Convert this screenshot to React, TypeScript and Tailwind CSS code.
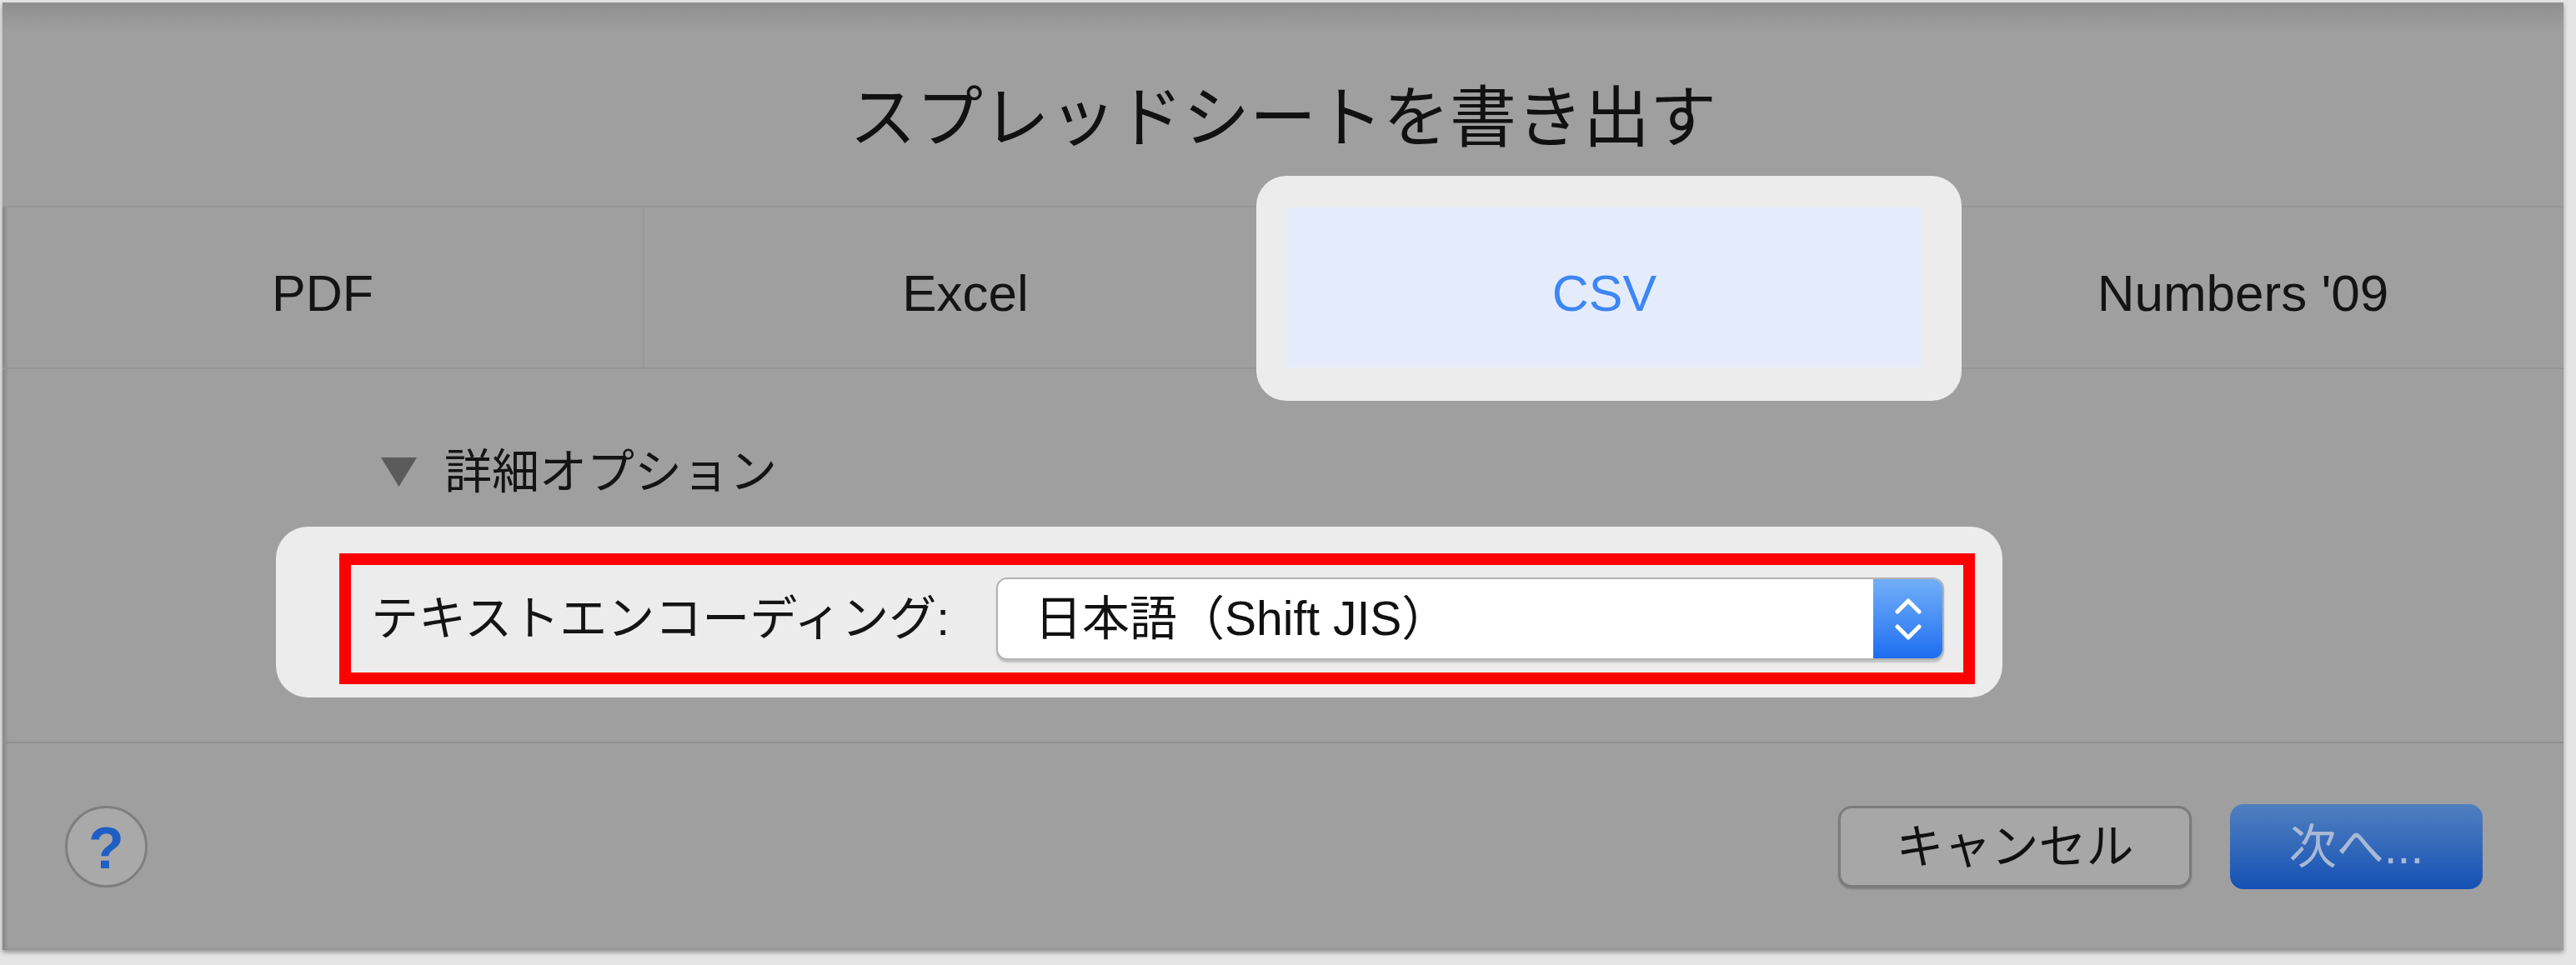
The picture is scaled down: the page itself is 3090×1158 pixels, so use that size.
import React from "react"

// ---------------------------------------------------------------------------
// Export dialog: "スプレッドシートを書き出す" with CSV tab selected
// ---------------------------------------------------------------------------

type Tab = { id: string; label: string }

const TABS: Tab[] = [
  { id: "pdf", label: "PDF" },
  { id: "excel", label: "Excel" },
  { id: "csv", label: "CSV" },
  { id: "numbers", label: "Numbers '09" },
]

function Stepper() {
  return (
    <svg width="34" height="52" viewBox="0 0 34 52" fill="none">
      <path d="M4 17 L17 4 L30 17" stroke="white" strokeWidth="5" strokeLinecap="round" strokeLinejoin="round" />
      <path d="M4 35 L17 48 L30 35" stroke="white" strokeWidth="5" strokeLinecap="round" strokeLinejoin="round" />
    </svg>
  )
}

function TabRow() {
  return (
    <div className="grid grid-cols-[770px_770px_763px_1fr] h-[196px] border-y-2 border-[#959595] shrink-0">
      {TABS.map((tab) =>
        tab.id === "csv" ? (
          <div key={tab.id} className="relative">
            {/* highlight frame round the selected tab */}
            <div className="absolute -left-[36px] -right-[47px] -top-[38px] -bottom-[40px] rounded-[36px] bg-[#ececec]" />
            <div className="relative h-full bg-[#e4ecfc] flex items-center justify-center pt-[14px] text-[61px] leading-none text-[#3d86f4]">
              {tab.label}
            </div>
          </div>
        ) : (
          <div
            key={tab.id}
            className={
              tab.id === "pdf"
                ? "flex items-center justify-center pt-[14px] text-[61px] leading-none text-[#141414] border-r-2 border-[#989898]"
                : "flex items-center justify-center pt-[14px] text-[62px] leading-none text-[#141414]"
            }
          >
            {tab.label}
          </div>
        )
      )}
    </div>
  )
}

export default function App() {
  return (
    <div className="w-[3090px] h-[1158px] bg-[#e4e4e4] pt-[3px] pl-[3px] pr-[15px] pb-[18px] flex font-['Liberation_Sans','Noto_Sans_CJK_JP',sans-serif]">
      <div className="flex-1 flex flex-col bg-[#9f9f9f] shadow-[inset_4px_0_4px_rgba(0,0,0,0.14),0_3px_5px_rgba(0,0,0,0.35)]">
        {/* Title */}
        <div className="h-[244px] shrink-0 pt-[99px] text-center text-[80px] leading-[80px] text-[#111] bg-linear-to-b from-[#8f8f8f] to-[#9f9f9f] to-[14%]">
          スプレッドシートを書き出す
        </div>

        <TabRow />

        {/* Options */}
        <div className="h-[447px] shrink-0 flex flex-col pl-[328px]">
          <div className="mt-[95px] h-[57px] flex items-center pl-[126px]">
            <svg width="43" height="35" viewBox="0 0 43 35" className="shrink-0">
              <polygon points="0,0 43,0 21.5,35" fill="#5b5b5b" />
            </svg>
            <span className="ml-[33px] text-[57px] leading-[57px] text-[#141414]">詳細オプション</span>
          </div>

          <div className="mt-[37px] w-[2071px] h-[205px] rounded-[38px] bg-[#ececec] pl-[76px] pr-[33px] pt-[32px] pb-[16px]">
            <div className="h-full border-[14px] border-[#ff0000] flex items-center justify-between pl-[24px] pr-[23px]">
              <span className="text-[57px] leading-[57px] text-[#141414] whitespace-nowrap">
                テキストエンコーディング:
              </span>
              <div className="w-[1137px] h-[99px] rounded-[13px] bg-white border-2 border-[#b2b2b2] shadow-[0_3px_2px_rgba(0,0,0,0.18)] flex overflow-hidden">
                <div className="flex-1 flex items-center pl-[44px] text-[57px] leading-[57px] text-[#111]">
                  日本語（Shift JIS）
                </div>
                <div className="w-[83px] flex items-center justify-center bg-linear-to-b from-[#72aff7] to-[#1c6cf1]">
                  <Stepper />
                </div>
              </div>
            </div>
          </div>
        </div>

        {/* Footer */}
        <div className="flex-1 border-t-2 border-[#8f8f8f] flex items-center pl-[75px] pr-[97px]">
          <div className="w-[99px] h-[98px] rounded-full border-[3px] border-[#7e7e7e] bg-[#a9a9a9] flex items-center justify-center pt-[4px] text-[70px] font-bold leading-none text-[#1f5fc4]">
            ?
          </div>
          <div className="ml-auto w-[424px] h-[98px] rounded-[16px] border-[3px] border-[#7b7b7b] bg-[#a7a7a7] shadow-[0_2px_2px_rgba(0,0,0,0.2)] flex items-center justify-center text-[57px] leading-none text-[#111]">
            キャンセル
          </div>
          <div className="ml-[46px] w-[303px] h-[102px] rounded-[16px] bg-linear-to-b from-[#4f7fbf] to-[#1450b4] flex items-center justify-center text-[57px] leading-none text-[#a9b9d5]">
            次へ...
          </div>
        </div>
      </div>
    </div>
  )
}
